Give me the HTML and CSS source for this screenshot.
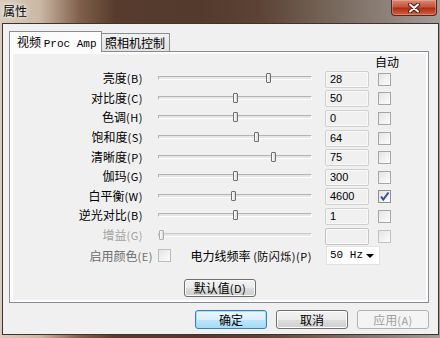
FILE: index.html
```html
<!DOCTYPE html>
<html lang="zh-CN">
<head>
    <meta charset="UTF-8">
    <title>属性</title>
    <link rel="stylesheet" href="styles.css">
</head>
<body>

    <div class="window">
        <div class="titlebar">
            <span class="title">属性</span>
            <div class="close">
                <svg width="14" height="10" viewBox="0 0 14 10">
                    <path d="M3 1.5 L11 8.5 M11 1.5 L3 8.5" stroke="#4a1d16" stroke-width="4" stroke-linecap="round"/>
                    <path d="M3 1.5 L11 8.5 M11 1.5 L3 8.5" stroke="#ffffff" stroke-width="2" stroke-linecap="round"/>
                </svg>
            </div>
        </div>

        <div class="client">
            <div class="tabs">
                <div class="tab active">视频 <span class="mono">Proc Amp</span></div>
                <div class="tab">照相机控制</div>
            </div>

            <div class="panel">
                <div class="page">
                    <div class="auto-head">自动</div>

                    <div class="row">
                        <span class="lbl">亮度<span class="key">(B)</span></span>
                        <div class="slider"><div class="thumb" style="left:108px"></div></div>
                        <div class="val">28</div>
                        <div class="chk"></div>
                    </div>
                    <div class="row">
                        <span class="lbl">对比度<span class="key">(C)</span></span>
                        <div class="slider"><div class="thumb" style="left:75px"></div></div>
                        <div class="val">50</div>
                        <div class="chk"></div>
                    </div>
                    <div class="row">
                        <span class="lbl">色调<span class="key">(H)</span></span>
                        <div class="slider"><div class="thumb" style="left:75px"></div></div>
                        <div class="val">0</div>
                        <div class="chk"></div>
                    </div>
                    <div class="row">
                        <span class="lbl">饱和度<span class="key">(S)</span></span>
                        <div class="slider"><div class="thumb" style="left:96px"></div></div>
                        <div class="val">64</div>
                        <div class="chk"></div>
                    </div>
                    <div class="row">
                        <span class="lbl">清晰度<span class="key">(P)</span></span>
                        <div class="slider"><div class="thumb" style="left:113px"></div></div>
                        <div class="val">75</div>
                        <div class="chk"></div>
                    </div>
                    <div class="row">
                        <span class="lbl">伽玛<span class="key">(G)</span></span>
                        <div class="slider"><div class="thumb" style="left:75px"></div></div>
                        <div class="val">300</div>
                        <div class="chk"></div>
                    </div>
                    <div class="row">
                        <span class="lbl">白平衡<span class="key">(W)</span></span>
                        <div class="slider"><div class="thumb" style="left:73px"></div></div>
                        <div class="val">4600</div>
                        <div class="chk checked">
                            <svg width="11" height="11" viewBox="0 0 11 11">
                                <path d="M2 5.5 L4.3 8.5 L9.5 1.5" fill="none" stroke="#2f4f95" stroke-width="2"/>
                            </svg>
                        </div>
                    </div>
                    <div class="row">
                        <span class="lbl">逆光对比<span class="key">(B)</span></span>
                        <div class="slider"><div class="thumb" style="left:75px"></div></div>
                        <div class="val">1</div>
                        <div class="chk"></div>
                    </div>
                    <div class="row disabled">
                        <span class="lbl">增益<span class="key">(G)</span></span>
                        <div class="slider"><div class="thumb" style="left:1px"></div></div>
                        <div class="val"></div>
                        <div class="chk"></div>
                    </div>

                    <div class="row extra">
                        <span class="lbl color-lbl">启用颜色<span class="key">(E)</span></span>
                        <div class="chk off"></div>
                        <span class="freq-lbl">电力线频率 <span class="key">(防闪烁)(P)</span></span>
                        <div class="dropdown">
                            <span class="mono">50 Hz</span>
                            <span class="arrow"></span>
                        </div>
                    </div>

                    <div class="defaults">
                        <button class="btn small">默认值<span class="key">(D)</span></button>
                    </div>
                </div>
            </div>

            <div class="actions">
                <button class="btn primary">确定</button>
                <button class="btn">取消</button>
                <button class="btn" disabled>应用<span class="key">(A)</span></button>
            </div>
        </div>
    </div>

</body>
</html>
```

FILE: styles.css
```css
body {
    margin: 0;
    font-family: "Noto Sans CJK SC", "Liberation Sans", sans-serif;
    font-size: 12px;
    color: #000;
}
.window {
    width: 440px;
    height: 338px;
    overflow: hidden;
    background: linear-gradient(to right, #d9ccbf 0, #cbb7a4 40px, #7f5f4b 80px, #573c2e 115px, #533a2c 200px, #5c4335 260px, #76665a 330px, #928780 400px, #a39d98 440px);
}
.titlebar {
    height: 23px;
    display: flex;
    justify-content: space-between;
    align-items: flex-start;
}
.title {
    padding-left: 3px;
    line-height: 22px;
    color: #000;
    text-shadow: 0 0 6px #fff, 0 0 3px #fff;
}
.close {
    width: 46px;
    height: 16px;
    margin-right: 3px;
    box-sizing: border-box;
    border: 1px solid #5b2419;
    border-top: none;
    border-radius: 0 0 4px 4px;
    background: linear-gradient(to bottom, #d88a78 0, #c4553d 45%, #b02e14 55%, #d0613f 100%);
    box-shadow: inset 0 0 0 1px rgba(255, 200, 180, 0.35);
    display: flex;
    align-items: center;
    justify-content: center;
}
.client {
    margin: 0 1px 0 2px;
    height: 312px;
    box-sizing: border-box;
    border: 1px solid #3d3430;
    background: #f0f0f0;
}
.tabs {
    display: flex;
    align-items: flex-end;
    height: 20px;
    margin: 7px 0 0 6px;
    position: relative;
    z-index: 1;
}
.tab {
    box-sizing: border-box;
    height: 18px;
    width: 68px;
    padding-left: 3px;
    line-height: 17px;
    border: 1px solid #898c95;
    border-left: none;
    border-bottom: none;
    background: linear-gradient(to bottom, #f2f2f2, #e1e1e1);
    white-space: nowrap;
}
.tab.active {
    width: 93px;
    height: 21px;
    margin-bottom: -1px;
    padding-left: 7px;
    line-height: 19px;
    border-left: 1px solid #898c95;
    background: #fcfcfc;
}
.mono {
    font-family: "Liberation Mono", monospace;
    font-size: 11px;
    white-space: nowrap;
}
.panel {
    box-sizing: border-box;
    width: 420px;
    height: 252px;
    margin-left: 6px;
    padding: 2px 2px 2px 3px;
    border: 1px solid #898c95;
    background: #fcfcfc;
}
.page {
    height: 100%;
    background: #f0f0f0;
    padding-top: 1px;
    box-sizing: border-box;
}
.auto-head {
    height: 13px;
    line-height: 13px;
    padding-left: 362px;
}
.row {
    display: flex;
    align-items: center;
    height: 19.6px;
}
.lbl {
    width: 130px;
    text-align: right;
    white-space: nowrap;
}
.key {
    font-size: 11px;
    letter-spacing: 0.5px;
}
.slider {
    position: relative;
    width: 154px;
    height: 11px;
    margin-left: 15px;
}
.slider::before {
    content: "";
    position: absolute;
    left: 0;
    right: 0;
    top: 4px;
    height: 2px;
    border: 1px solid #b4b4b4;
    border-bottom-color: #fff;
    border-right-color: #fff;
    background: #e6e6e6;
}
.thumb {
    position: absolute;
    top: 1px;
    width: 3px;
    height: 8px;
    border: 1px solid #6f6f6f;
    border-radius: 1px;
    background: linear-gradient(to right, #fff, #d8d8d8);
}
.val {
    box-sizing: border-box;
    width: 44px;
    height: 17px;
    margin: 3px 0 0 13px;
    padding-left: 4px;
    line-height: 15px;
    border: 1px solid #cfcfcf;
    border-radius: 2px;
    box-shadow: inset 0 0 0 1px #fafafa;
    background: #f0f0f0;
    font-family: "Liberation Sans", sans-serif;
    font-size: 11px;
}
.chk {
    box-sizing: border-box;
    width: 13px;
    height: 13px;
    margin: 3px 0 0 9px;
    border: 1px solid #a6a6a6;
    background: linear-gradient(135deg, #e4e4e4, #fdfdfd);
    display: flex;
    align-items: center;
    justify-content: center;
}
.chk.checked {
    border-color: #8e8f8f;
}
.disabled .lbl {
    color: #a3a3a3;
}
.disabled .thumb {
    border-color: #b0b0b0;
}
.disabled .slider::before {
    border-color: #cacaca #fff #fff #cacaca;
}
.disabled .val {
    border-color: #c4c4c4;
}
.disabled .chk {
    border-color: #c2c2c2;
}
.extra {
    height: 20px;
    margin-top: 1px;
}
.color-lbl {
    width: 140px;
    color: #6d6d6d;
}
.chk.off {
    margin: 0 0 0 5px;
    border-color: #bdbdbd;
}
.freq-lbl {
    width: 126px;
    margin-left: 15px;
    text-align: right;
    white-space: nowrap;
}
.dropdown {
    box-sizing: border-box;
    width: 54px;
    height: 19px;
    margin-left: 14px;
    padding: 0 5px 0 3px;
    border: 1px solid #e2e2e2;
    background: #fff;
    display: flex;
    align-items: center;
    justify-content: space-between;
}
.arrow {
    flex: none;
    width: 0;
    height: 0;
    border-left: 4px solid transparent;
    border-right: 4px solid transparent;
    border-top: 4px solid #000;
    margin-top: 2px;
}
.defaults {
    margin-top: 14px;
    display: flex;
    justify-content: center;
}
.btn {
    box-sizing: border-box;
    width: 72px;
    height: 19px;
    padding: 0;
    font-family: "Noto Sans CJK SC", sans-serif;
    font-size: 12px;
    line-height: 16px;
    color: #000;
    border: 1px solid #707070;
    border-radius: 3px;
    background: linear-gradient(to bottom, #f2f2f2 0, #ebebeb 50%, #dddddd 51%, #cfcfcf 100%);
    box-shadow: inset 0 0 0 1px #fcfcfc;
}
.btn.small {
    height: 18px;
    margin-left: 1px;
}
.btn.primary {
    border-color: #3c7fb1;
    background: linear-gradient(to bottom, #eaf6fd 0, #d9f0fc 50%, #bee6fd 51%, #a7d9f5 100%);
    box-shadow: inset 0 0 0 1px #9ee2f9;
}
.btn:disabled {
    color: #a0a0a0;
    border-color: #adb2b5;
    background: #f4f4f4;
    box-shadow: none;
}
.actions {
    display: flex;
    justify-content: flex-end;
    gap: 9px;
    margin-top: 7px;
    padding-right: 9px;
}
```
